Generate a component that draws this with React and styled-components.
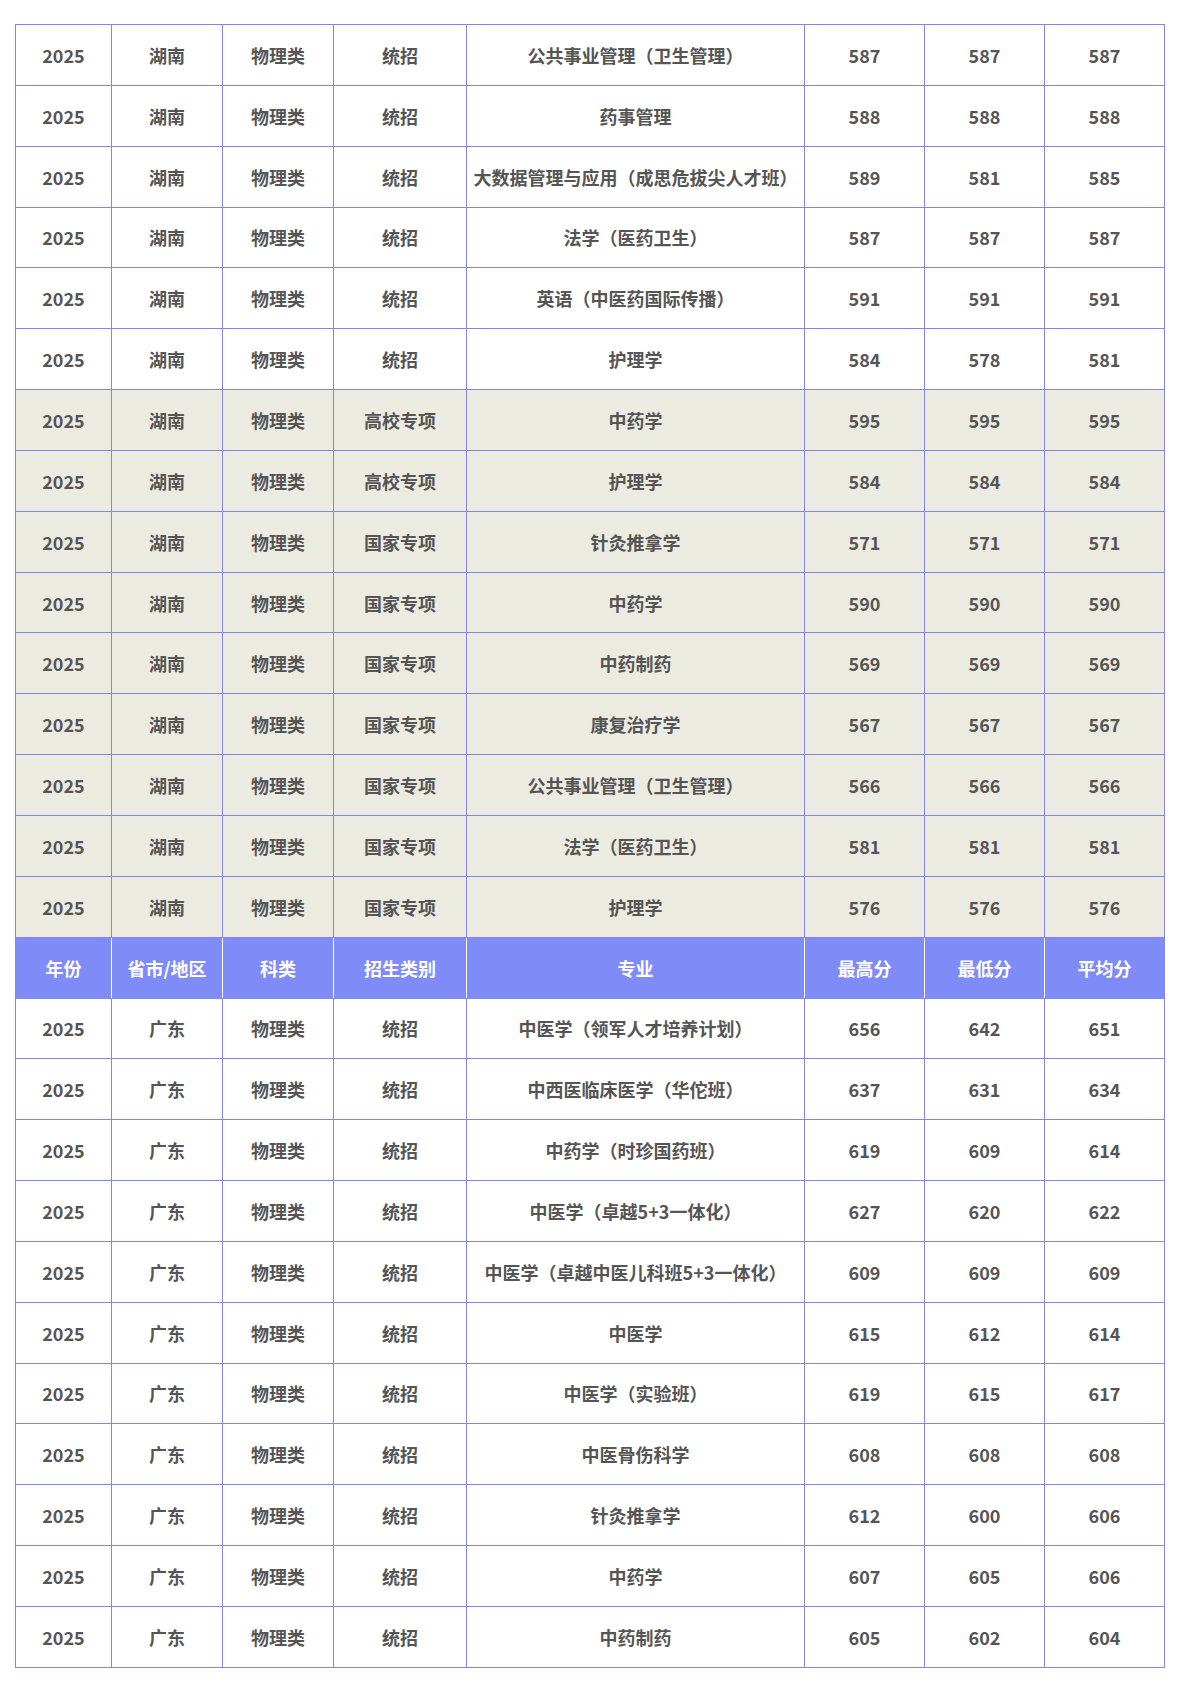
import React from "react";
import styled, { createGlobalStyle } from "styled-components";

const Global = createGlobalStyle`
  html, body { margin: 0; padding: 0; background: #ffffff; }
  body { font-family: "Noto Sans CJK SC", "Noto Sans", sans-serif; }
`;

const Page = styled.div`
  padding: 24px 26px 15px 15px;
`;

const Table = styled.table`
  width: 1149px;
  border-collapse: collapse;
  table-layout: fixed;
  border: 1px solid #8585e6;
`;

const Cell = styled.td`
  height: 59.85px;
  padding: 0;
  border: 1px solid #8585e6;
  background: ${(p) => (p.$shade ? "#ecebe2" : "#ffffff")};
  color: #555555;
  font-weight: 700;
  font-size: 18px;
  text-align: center;
  vertical-align: middle;
  white-space: nowrap;
`;

const HeadCell = styled.td`
  height: 59.85px;
  padding: 0;
  border: 1px solid #ffffff;
  border-top-color: #7f8cf7;
  border-bottom-color: #7f8cf7;
  background: #7f8cf7;
  color: #ffffff;
  font-weight: 700;
  font-size: 18px;
  text-align: center;
  vertical-align: middle;
  white-space: nowrap;
  &:first-child { border-left-color: #8585e6; }
  &:last-child { border-right-color: #8585e6; }
`;

const widths = [96, 111, 111, 133, 338, 120, 120, 120];

const hunan = [
  ["统招", "公共事业管理（卫生管理）", 587, 587, 587],
  ["统招", "药事管理", 588, 588, 588],
  ["统招", "大数据管理与应用（成思危拔尖人才班）", 589, 581, 585],
  ["统招", "法学（医药卫生）", 587, 587, 587],
  ["统招", "英语（中医药国际传播）", 591, 591, 591],
  ["统招", "护理学", 584, 578, 581],
  ["高校专项", "中药学", 595, 595, 595],
  ["高校专项", "护理学", 584, 584, 584],
  ["国家专项", "针灸推拿学", 571, 571, 571],
  ["国家专项", "中药学", 590, 590, 590],
  ["国家专项", "中药制药", 569, 569, 569],
  ["国家专项", "康复治疗学", 567, 567, 567],
  ["国家专项", "公共事业管理（卫生管理）", 566, 566, 566],
  ["国家专项", "法学（医药卫生）", 581, 581, 581],
  ["国家专项", "护理学", 576, 576, 576],
];

const guangdong = [
  ["中医学（领军人才培养计划）", 656, 642, 651],
  ["中西医临床医学（华佗班）", 637, 631, 634],
  ["中药学（时珍国药班）", 619, 609, 614],
  ["中医学（卓越5+3一体化）", 627, 620, 622],
  ["中医学（卓越中医儿科班5+3一体化）", 609, 609, 609],
  ["中医学", 615, 612, 614],
  ["中医学（实验班）", 619, 615, 617],
  ["中医骨伤科学", 608, 608, 608],
  ["针灸推拿学", 612, 600, 606],
  ["中药学", 607, 605, 606],
  ["中药制药", 605, 602, 604],
];

const headers = ["年份", "省市/地区", "科类", "招生类别", "专业", "最高分", "最低分", "平均分"];

function Row({ cells, shade }) {
  return (
    <tr>
      {cells.map((c, i) => (
        <Cell key={i} $shade={shade}>{c}</Cell>
      ))}
    </tr>
  );
}

export default function App() {
  return (
    <Page>
      <Global />
      <Table>
        <colgroup>
          {widths.map((w, i) => (
            <col key={i} style={{ width: w }} />
          ))}
        </colgroup>
        <tbody>
          {hunan.map((r, i) => (
            <Row key={"h" + i} shade={r[0] !== "统招"} cells={["2025", "湖南", "物理类", ...r]} />
          ))}
          <tr>
            {headers.map((h) => (
              <HeadCell key={h}>{h}</HeadCell>
            ))}
          </tr>
          {guangdong.map((r, i) => (
            <Row key={"g" + i} cells={["2025", "广东", "物理类", "统招", ...r]} />
          ))}
        </tbody>
      </Table>
    </Page>
  );
}
